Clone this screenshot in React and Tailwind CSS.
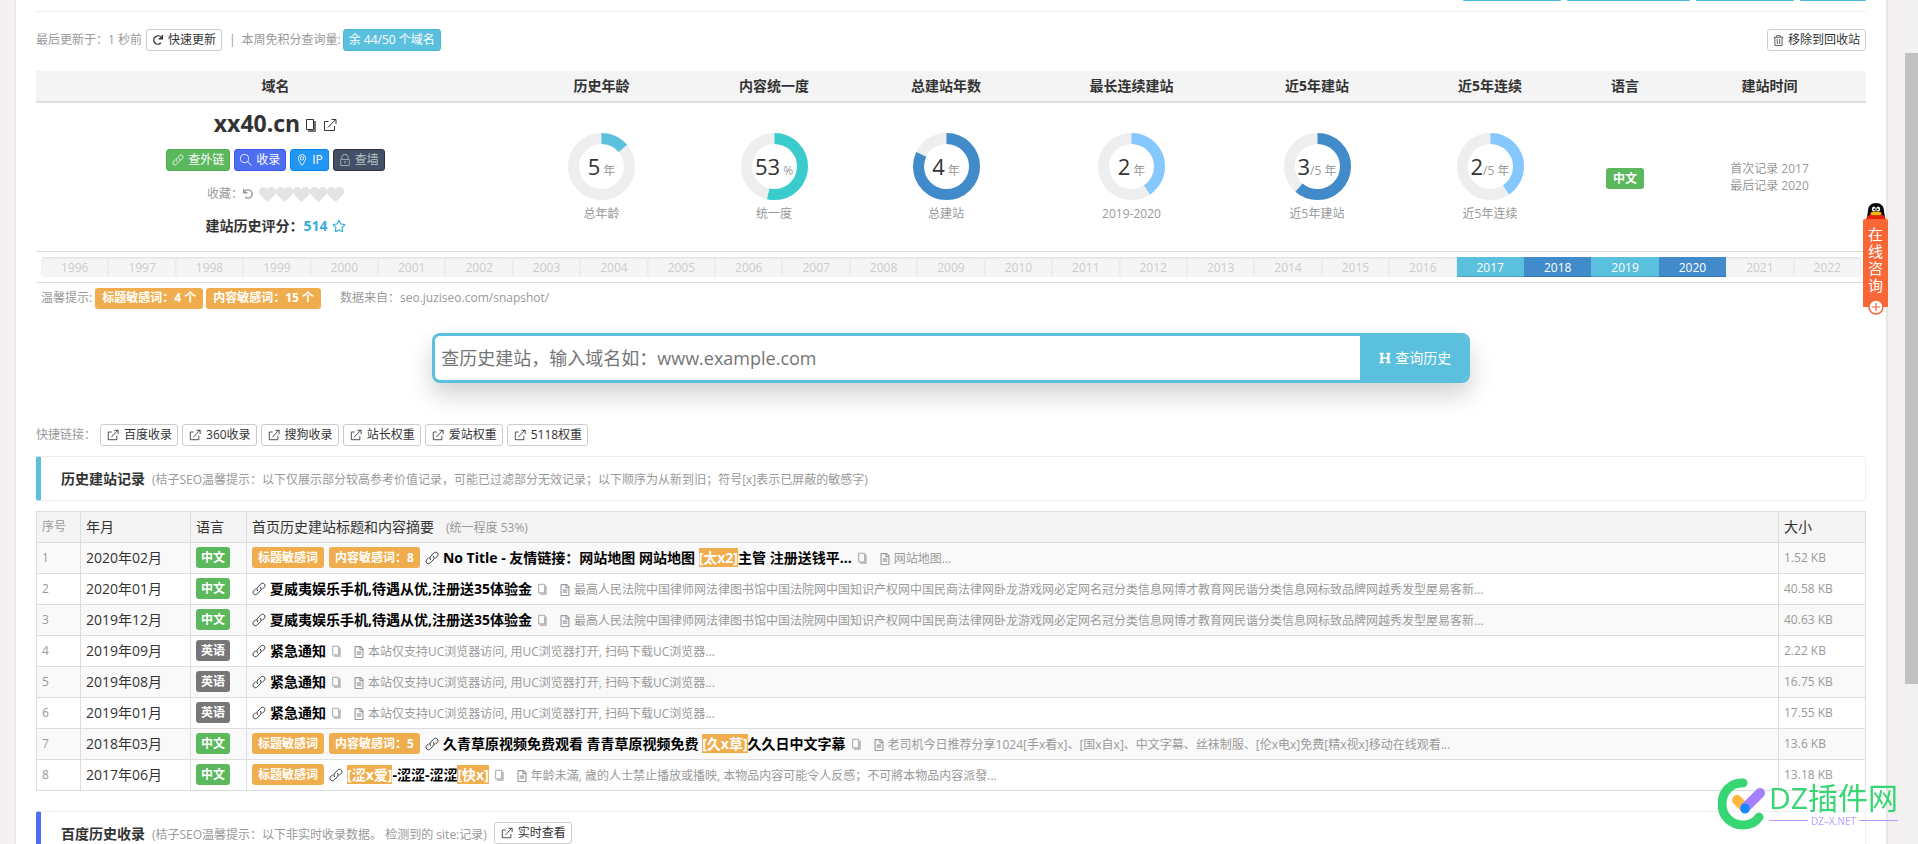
import React from 'react';
import clsx from 'clsx';
import { FaHeading, FaHeart, FaRegFileAlt, FaRegStar, FaRegTrashAlt, FaRedo, FaUndo } from 'react-icons/fa';
import { TfiLocationPin, TfiLock, TfiSearch } from 'react-icons/tfi';

const stats = [
    { head: '历史年龄', width: 'w-[173px]', value: '5', unit: ' 年', label: '总年龄', part: 0.138, color: '#5bc0de' },
    { head: '内容统一度', width: 'w-[172px]', value: '53', unit: ' %', label: '统一度', part: 0.535, color: '#3acccc' },
    { head: '总建站年数', width: 'w-[172px]', value: '4', unit: ' 年', label: '总建站', part: 0.82, color: '#428bca' },
    { head: '最长连续建站', width: 'w-[199px]', value: '2', unit: ' 年', label: '2019-2020', part: 0.406, color: '#85c7ff' },
    { head: '近5年建站', width: 'w-[172px]', value: '3', unit: '/5 年', label: '近5年建站', part: 0.614, color: '#428bca' },
    { head: '近5年连续', width: 'w-[174px]', value: '2', unit: '/5 年', label: '近5年连续', part: 0.406, color: '#85c7ff' },
];

const years = Array.from({ length: 27 }, (_, i) => 1996 + i);
const activeYears = [2017, 2018, 2019, 2020];

const quickLinks = ['百度收录', '360收录', '搜狗收录', '站长权重', '爱站权重', '5118权重'];

const lawText = '最高人民法院中国律师网法律图书馆中国法院网中国知识产权网中国民商法律网卧龙游戏网必定网名冠分类信息网博才教育网民谐分类信息网标致品牌网越秀发型屋易客新...';
const ucText = '本站仅支持UC浏览器访问, 用UC浏览器打开, 扫码下载UC浏览器...';

// title pieces that start with "[" are masked words
const records = [
    {
        month: '2020年02月', lang: '中文', tags: ['标题敏感词', '内容敏感词：8'], size: '1.52 KB',
        title: ['No Title - 友情链接：网站地图 网站地图 ', '[太x2]', '主管 注册送钱平...'], summary: '网站地图...',
    },
    { month: '2020年01月', lang: '中文', tags: [], size: '40.58 KB', title: ['夏威夷娱乐手机,待遇从优,注册送35体验金'], summary: lawText },
    { month: '2019年12月', lang: '中文', tags: [], size: '40.63 KB', title: ['夏威夷娱乐手机,待遇从优,注册送35体验金'], summary: lawText },
    { month: '2019年09月', lang: '英语', tags: [], size: '2.22 KB', title: ['紧急通知'], summary: ucText },
    { month: '2019年08月', lang: '英语', tags: [], size: '16.75 KB', title: ['紧急通知'], summary: ucText },
    { month: '2019年01月', lang: '英语', tags: [], size: '17.55 KB', title: ['紧急通知'], summary: ucText },
    {
        month: '2018年03月', lang: '中文', tags: ['标题敏感词', '内容敏感词：5'], size: '13.6 KB',
        title: ['久青草原视频免费观看 青青草原视频免费 ', '[久x草]', '久久日中文字幕'],
        summary: '老司机今日推荐分享1024[手x看x]、[国x自x]、中文字幕、丝袜制服、[伦x电x]免费[精x视x]移动在线观看...',
    },
    {
        month: '2017年06月', lang: '中文', tags: ['标题敏感词'], size: '13.18 KB',
        title: ['[涩x爱]', '-涩涩-涩涩', '[快x]'],
        summary: '年龄未滿, 歲的人士禁止播放或播映, 本物品内容可能令人反感；不可將本物品内容派發...',
    },
];

function CopyIcon({ className }) {
    return (
        <svg viewBox="0 0 12 14" fill="none" stroke="currentColor" className={className}>
            <path d="M1.5 1.5h7v10h-7z" />
            <path d="M9.5 3v9.5H3M10.5 3v10.5H3" strokeOpacity="0.7" />
        </svg>
    );
}

function OpenIcon({ className }) {
    return (
        <svg viewBox="0 0 14 14" fill="none" stroke="currentColor" className={className}>
            <path d="M5.5 3.500H1.500v9h10V8" />
            <path d="M5 9.500L13 1M8.500 1.500h4.500v4.500" />
        </svg>
    );
}

function ChainIcon({ className }) {
    return (
        <svg viewBox="0 0 14 14" fill="none" stroke="currentColor" strokeLinecap="round" className={className}>
            <path d="M5.500 8.700C4.600 7.600 4.700 6.200 5.700 5.200L8.700 2.100C9.800 1 11.400 1 12.300 1.900C13.200 2.900 13.200 4.400 12.200 5.400L10.400 7.200" />
            <path d="M8.500 5.300C9.400 6.400 9.300 7.800 8.300 8.800L5.300 11.900C4.200 13 2.600 13 1.700 12.100C0.800 11.100 0.800 9.600 1.800 8.600L3.600 6.800" />
        </svg>
    );
}

function Button({ children, className }) {
    return (
        <button
            type="button"
            className={clsx('inline-flex h-[22px] shrink-0 items-center gap-1 rounded-[3px] border px-[5px] text-xs whitespace-nowrap', className)}
        >
            {children}
        </button>
    );
}

function Label({ children, className }) {
    return (
        <span className={clsx('inline-flex h-[21px] shrink-0 items-center rounded-[3px] text-xs font-bold whitespace-nowrap text-white', className)}>
            {children}
        </span>
    );
}

function Donut({ value, unit, part, color }) {
    const length = 2 * Math.PI * 28;
    return (
        <div className="relative mx-auto size-[67px]">
            <svg viewBox="0 0 67 67" className="size-full" fill="none" strokeWidth="11">
                <circle cx="33.5" cy="33.5" r="28" stroke="#eeeeee" />
                <circle
                    cx="33.5"
                    cy="33.5"
                    r="28"
                    stroke={color}
                    strokeDasharray={`${length * part} ${length}`}
                    transform="rotate(-90 33.5 33.5)"
                />
            </svg>
            <div className="absolute inset-0 flex items-baseline justify-center leading-[66px] whitespace-pre text-[#333]">
                <span className="text-[22px]">{value}</span>
                <span className="text-xs text-[#999]">{unit}</span>
            </div>
        </div>
    );
}

function SectionTitle({ title, note, className, children }) {
    return (
        <div className={clsx('flex h-[45px] items-baseline rounded-[3px] border border-l-[5px] border-[#eee] pl-5', className)}>
            <h2 className="text-sm leading-[43px] font-bold text-[#333]">{title}</h2>
            <span className="ml-[7px] text-xs text-[#999]">{note}</span>
            {children}
        </div>
    );
}

function Overview() {
    return (
        <table className="mt-5 w-full table-fixed text-center">
            <thead>
                <tr className="h-[31px] border-b-2 border-[#ddd] bg-[#f4f4f4] text-sm text-[#333]">
                    <th className="w-[479px]">域名</th>
                    {stats.map((s) => (
                        <th key={s.head} className={s.width}>{s.head}</th>
                    ))}
                    <th className="w-[96px]">语言</th>
                    <th className="w-[193px]">建站时间</th>
                </tr>
            </thead>
            <tbody>
                <tr className="h-[149px] border-b border-[#ddd]">
                    <td className="pt-1 align-top">
                        <div className="flex h-8 items-center justify-center text-[#333]">
                            <strong className="text-[23px]">xx40.cn</strong>
                            <CopyIcon className="mt-1 ml-[5px] h-3.5 w-3" />
                            <OpenIcon className="mt-1 ml-1.5 size-3.5" />
                        </div>
                        <div className="mt-2.5 flex justify-center gap-1 text-white">
                            <Button className="border-[#4cae4c] bg-[#5cb85c]"><ChainIcon className="size-3" />查外链</Button>
                            <Button className="border-[#3b5bea] bg-[#4e6ef2]"><TfiSearch className="size-3" />收录</Button>
                            <Button className="border-[#0c85e9] bg-[#2196f3]"><TfiLocationPin className="size-3" />IP</Button>
                            <Button className="border-[#2b303b] bg-[#434f66] text-[#b9c4c4]"><TfiLock className="size-3" />查墙</Button>
                        </div>
                        <div className="mt-[13px] flex h-5 items-center justify-center text-xs text-[#999]">
                            收藏：
                            <FaUndo className="size-2.5" />
                            <span className="ml-1.5 flex text-[#e3e3e3]">
                                {[1, 2, 3, 4, 5].map((n) => (
                                    <FaHeart key={n} className="h-[17px] w-[17px]" />
                                ))}
                            </span>
                        </div>
                        <div className="mt-3 flex h-5 items-center justify-center text-sm font-bold text-[#333]">
                            建站历史评分：
                            <span className="text-[#39afd6]">514</span>
                            <FaRegStar className="ml-1 size-3.5 text-[#39afd6]" />
                        </div>
                    </td>
                    {stats.map((s) => (
                        <td key={s.head} className="pt-[30px] align-top">
                            <Donut {...s} />
                            <div className="mt-1 text-xs leading-5 text-[#999]">{s.label}</div>
                        </td>
                    ))}
                    <td className="align-middle">
                        <Label className="bg-[#5cb85c] px-[7px]">中文</Label>
                    </td>
                    <td className="text-xs leading-[17px] text-[#999]">
                        首次记录 2017<br />最后记录 2020
                    </td>
                </tr>
            </tbody>
        </table>
    );
}

function Timeline() {
    return (
        <div className="border-b border-[#ddd] px-[5px] py-[5px]">
            <ol className="flex h-5 overflow-hidden rounded text-center text-xs leading-[21px]">
                {years.map((year) => (
                    <li
                        key={year}
                        className={clsx(
                            'flex-1',
                            !activeYears.includes(year) && 'bg-[#f5f5f5] text-[#ccc] shadow-[inset_-1px_0_0_#ebebeb,inset_0_1px_2px_rgba(0,0,0,0.1)]',
                            activeYears.includes(year) && 'text-white shadow-[inset_0_-1px_0_rgba(0,0,0,0.15)]',
                            activeYears.includes(year) && (year % 2 ? 'bg-[#5bc0de]' : 'bg-[#428bca]')
                        )}
                    >
                        {year}
                    </li>
                ))}
            </ol>
        </div>
    );
}

function SearchBar() {
    return (
        <div className="mx-auto mt-6 w-7/12 px-[15px]">
            <form className="flex h-[50px] overflow-hidden rounded-lg border-[3px] border-[#5bc0de] bg-white shadow-[0_12px_24px_rgba(0,0,0,0.18)]">
                <input
                    type="text"
                    aria-label="域名"
                    placeholder="查历史建站，输入域名如：www.example.com"
                    className="min-w-0 flex-1 px-1.5 text-lg outline-none placeholder:text-[#757575]"
                />
                <button type="button" className="flex w-[107px] items-center justify-center gap-1 bg-[#5bc0de] pl-1 text-sm text-white">
                    <FaHeading className="size-3" />
                    查询历史
                </button>
            </form>
        </div>
    );
}

function RecordTable() {
    return (
        <table className="mt-2.5 w-full table-fixed border-collapse text-left text-sm text-[#333] [&_td]:border [&_td]:border-[#ddd] [&_td]:px-[5px] [&_th]:border [&_th]:border-[#ddd] [&_th]:px-[5px] [&_th]:font-normal">
            <thead>
                <tr className="h-[31px] bg-[#f4f4f4]">
                    <th className="w-[44px] text-xs text-[#999]">序号</th>
                    <th className="w-[110px]">年月</th>
                    <th className="w-[56px]">语言</th>
                    <th>首页历史建站标题和内容摘要<span className="ml-3 text-xs text-[#999]">(统一程度 53%)</span></th>
                    <th className="w-[87px]">大小</th>
                </tr>
            </thead>
            <tbody>
                {records.map((r, i) => (
                    <tr key={r.month} className="h-[31px] odd:bg-[#f9f9f9]">
                        <td className="text-xs text-[#999]">{i + 1}</td>
                        <td>{r.month}</td>
                        <td>
                            <div className="flex">
                                <Label className={clsx('px-[5px]', r.lang === '中文' ? 'bg-[#5cb85c]' : 'bg-[#777]')}>{r.lang}</Label>
                            </div>
                        </td>
                        <td>
                            <div className="flex items-center whitespace-nowrap">
                                {r.tags.map((tag) => (
                                    <Label key={tag} className="mr-[5px] bg-[#f0ad4e] px-1.5">{tag}</Label>
                                ))}
                                <ChainIcon className="size-3.5 shrink-0" />
                                <a href="#" className="ml-1 leading-[17px] font-bold whitespace-pre text-black">
                                    {r.title.map((t) => (
                                        <span key={t} className={clsx(t[0] === '[' && 'bg-[#f0ad4e] text-white')}>{t}</span>
                                    ))}
                                </a>
                                <CopyIcon className="ml-[5px] h-3 w-[11px] shrink-0 text-[#999]" />
                                <span className="ml-3 flex items-center gap-1 pt-0.5 text-xs text-[#999]">
                                    <FaRegFileAlt className="h-3 w-2.5 shrink-0" />
                                    {r.summary}
                                </span>
                            </div>
                        </td>
                        <td className="text-xs text-[#999]">{r.size}</td>
                    </tr>
                ))}
            </tbody>
        </table>
    );
}

function OnlineChat() {
    return (
        <a href="#" className="fixed top-[203px] right-[30px] flex w-[25px] flex-col items-center">
            <svg viewBox="0 0 24 16" className="h-4 w-6">
                <path d="M4 8c0-5 3-8 8-8s8 3 8 8l1 6H3z" fill="#0b0b0b" />
                <path d="M2 16c1-3 4-4 5-5 3 2 7 2 10 0 1 1 4 2 5 5z" fill="#e8240c" />
                <ellipse cx="9.800" cy="6" rx="2" ry="2.600" fill="#fff" />
                <ellipse cx="14.200" cy="6" rx="2" ry="2.600" fill="#fff" />
                <circle cx="10.300" cy="6.300" r="0.900" fill="#000" />
                <circle cx="13.700" cy="6.300" r="0.900" fill="#000" />
                <ellipse cx="12" cy="10.500" rx="5.500" ry="1.900" fill="#fdb813" />
            </svg>
            <span className="flex h-[88px] w-full flex-col items-center rounded-t-xs bg-[#fa6737] pt-[7px] text-[15px] leading-[17px] text-white">
                <span>在</span><span>线</span><span>咨</span><span>询</span>
            </span>
            <svg viewBox="0 0 16 16" className="-mt-2 size-4" fill="none" stroke="#fa6737">
                <circle cx="8" cy="8" r="7" fill="#fff" strokeWidth="1.500" />
                <path d="M8 4v8M4 8h8" strokeWidth="1.200" />
            </svg>
        </a>
    );
}

function SiteMark() {
    return (
        <div className="fixed right-5 bottom-3.5 flex items-center">
            <svg viewBox="0 0 48 52" className="h-[52px] w-12" fill="none" strokeLinecap="round">
                <path d="M25 5C13 4 4 14 4 26s9 21 21 21c7 0 13-3 16-8" stroke="#36d772" strokeWidth="9" />
                <path d="M19 22l8 8" stroke="#ffb83d" strokeWidth="10" />
                <path d="M27 30l15-15" stroke="#a681ff" strokeWidth="10" />
                <path d="M27 30v1" stroke="#1588ff" strokeWidth="9" />
            </svg>
            <div className="ml-[3px] w-[129px]">
                <div className="text-[30px] leading-[32px] whitespace-nowrap text-[#36d772]">DZ插件网</div>
                <div className="mt-px flex items-center gap-[3px] text-[10px] leading-3 whitespace-nowrap text-[#b59bff]">
                    <span className="h-px flex-1 bg-[#b59bff]" />
                    DZ–X.NET
                    <span className="h-px flex-1 bg-[#b59bff]" />
                </div>
            </div>
        </div>
    );
}

export default function App() {
    return (
        <div className="flex h-screen overflow-hidden bg-[#f2f0f1] font-['Open_Sans','Noto_Sans_CJK_SC',sans-serif] text-[#333]">
            <main className="mr-[17px] ml-[15px] min-w-0 flex-1 self-start border-r-2 border-l border-[#e6e6e6] bg-white px-5">
                <div className="flex h-px justify-end gap-1.5">
                    <span className="w-[98px] rounded-b-sm bg-[#46b8da]" />
                    <span className="w-[123px] rounded-b-sm bg-[#46b8da]" />
                    <span className="w-[98px] rounded-b-sm bg-[#46b8da]" />
                    <span className="w-[66px] rounded-b-sm bg-[#46b8da]" />
                </div>
                <hr className="mt-2.5 border-[#eee]" />

                <div className="mt-[17px] flex h-[22px] items-center text-xs text-[#999]">
                    最后更新于：1 秒前
                    <Button className="mr-[7px] ml-1 border-[#ccc] bg-white text-[#333]">
                        <FaRedo className="mx-px size-2.5" />
                        快速更新
                    </Button>
                    |<span className="ml-1.5">本周免积分查询量:</span>
                    <Button className="ml-0.5 border-[#46b8da] bg-[#5bc0de] text-white">余 44/50 个域名</Button>
                    <Button className="ml-auto border-[#ccc] bg-white text-[#333]">
                        <FaRegTrashAlt className="size-[11px] text-[#666]" />
                        移除到回收站
                    </Button>
                </div>

                <Overview />
                <Timeline />

                <div className="mt-[5px] ml-[5px] flex items-center gap-[3px] text-xs text-[#999]">
                    温馨提示:
                    <Label className="bg-[#f0ad4e] px-[7px]">标题敏感词：4 个</Label>
                    <Label className="bg-[#f0ad4e] px-[7px]">内容敏感词：15 个</Label>
                    <span className="ml-4">数据来自：seo.juziseo.com/snapshot/</span>
                </div>

                <SearchBar />

                <div className="mt-[41px] flex items-center gap-1 text-xs text-[#999]">
                    <span className="w-[60px]">快捷链接：</span>
                    {quickLinks.map((name) => (
                        <Button key={name} className="border-[#ccc] bg-white text-[#333]">
                            <OpenIcon className="mx-px size-3" />
                            {name}
                        </Button>
                    ))}
                </div>

                <SectionTitle
                    className="mt-2.5 border-l-[#5bc0de]"
                    title="历史建站记录"
                    note="(桔子SEO温馨提示：以下仅展示部分较高参考价值记录，可能已过滤部分无效记录；以下顺序为从新到旧；符号[x]表示已屏蔽的敏感字)"
                />
                <RecordTable />
                <SectionTitle
                    className="mt-5 border-l-[#4e6ef2]"
                    title="百度历史收录"
                    note="(桔子SEO温馨提示：以下非实时收录数据。 检测到的 site:记录)"
                >
                    <Button className="ml-[7px] border-[#ccc] bg-white text-[#333]">
                        <OpenIcon className="mx-px size-3" />
                        实时查看
                    </Button>
                </SectionTitle>
            </main>

            {/* Scroll track */}
            <div className="w-[13px] bg-[#f1f1f1] pt-[53px]">
                <div className="h-[631px] bg-[#c1c1c1]" />
            </div>

            <OnlineChat />
            <SiteMark />
        </div>
    );
}
